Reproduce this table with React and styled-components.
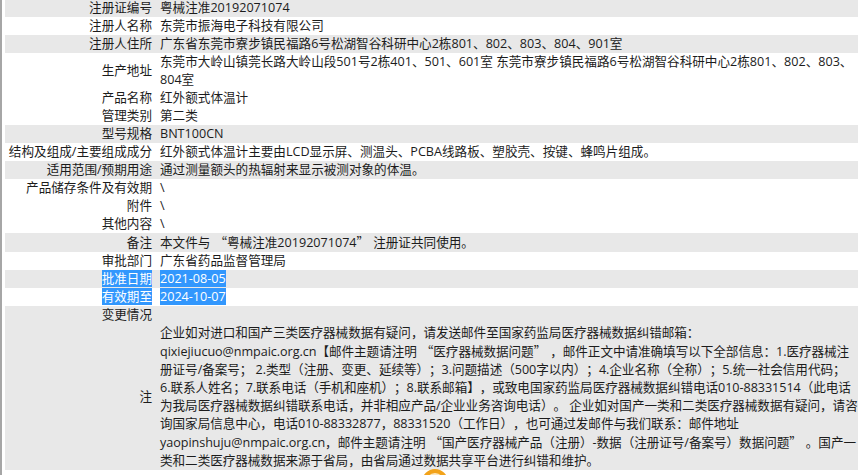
import React from "react";
import styled, { createGlobalStyle } from "styled-components";

const GlobalStyle = createGlobalStyle`
  html, body {
    margin: 0;
    padding: 0;
    background: #ffffff;
    overflow: hidden;
  }
  body {
    font-family: "Open Sans", "Noto Sans CJK SC", sans-serif;
    font-size: 12.6px;
    color: #1c1c1c;
    text-spacing-trim: space-all;
  }
`;

/* the table runs a few pixels past the right edge of the window */
const Frame = styled.div`
  width: calc(100% + 3px);
  border-left: 2px solid #a6a6a6;
  padding-left: 3px;
  margin-top: -1px;
  height: 476px;
  box-sizing: border-box;
`;

const Table = styled.table`
  width: 100%;
  table-layout: fixed;
  border-collapse: collapse;
  border-spacing: 0;
  line-height: 18px;
`;

const Row = styled.tr`
  background: ${({ $tone }) => ($tone === "gray" ? "#e8e8e8" : "#ffffff")};
`;

const Label = styled.th`
  width: 150px;
  padding: 0 3px 0 0;
  box-sizing: border-box;
  font-weight: normal;
  text-align: right;
  white-space: nowrap;
  vertical-align: ${({ $align }) => $align || "middle"};
`;

const Value = styled.td`
  padding: 0 0 0 5px;
  text-align: left;
  vertical-align: top;
`;

const NoticeLine = styled.div`
  white-space: nowrap;
  letter-spacing: -0.05px;
`;

/* the curly quotes of the original font take a little more than a full em */
const Quote = styled.span`
  font-family: "Noto Sans CJK SC", sans-serif;
  padding: ${({ $open }) => ($open ? "0 0 0 4px" : "0 4px 0 0")};
`;

const Selected = styled.span`
  background: #3297fd;
  color: #ffffff;
`;

const FloatBadge = styled.div`
  position: fixed;
  left: 422px;
  top: 469px;
  width: 26px;
  height: 26px;
  border-radius: 50%;
  border: 4px solid #f2a31b;
  background: #fde7bd;
  box-sizing: border-box;
`;

const fmt = (text) =>
  text.split(/([“”])/).map((part, i) =>
    part === "“" || part === "”" ? (
      <Quote key={i} $open={part === "“"}>
        {part}
      </Quote>
    ) : (
      part
    )
  );

const rows = [
  { label: "注册证编号", value: "粤械注准20192071074", tone: "gray" },
  { label: "注册人名称", value: "东莞市振海电子科技有限公司", tone: "white" },
  {
    label: "注册人住所",
    value: "广东省东莞市寮步镇民福路6号松湖智谷科研中心2栋801、802、803、804、901室",
    tone: "gray",
  },
  {
    label: "生产地址",
    value:
      "东莞市大岭山镇莞长路大岭山段501号2栋401、501、601室 东莞市寮步镇民福路6号松湖智谷科研中心2栋801、802、803、804室",
    tone: "white",
  },
  { label: "产品名称", value: "红外额式体温计", tone: "white" },
  { label: "管理类别", value: "第二类", tone: "white" },
  { label: "型号规格", value: "BNT100CN", tone: "gray" },
  {
    label: "结构及组成/主要组成成分",
    value: "红外额式体温计主要由LCD显示屏、测温头、PCBA线路板、塑胶壳、按键、蜂鸣片组成。",
    tone: "white",
  },
  { label: "适用范围/预期用途", value: "通过测量额头的热辐射来显示被测对象的体温。", tone: "gray" },
  { label: "产品储存条件及有效期", value: "\\", tone: "white" },
  { label: "附件", value: "\\", tone: "white" },
  { label: "其他内容", value: "\\", tone: "white" },
  { label: "备注", value: "本文件与“粤械注准20192071074”注册证共同使用。", tone: "gray" },
  { label: "审批部门", value: "广东省药品监督管理局", tone: "white" },
  { label: "批准日期", value: "2021-08-05", tone: "gray", selected: true },
  { label: "有效期至", value: "2024-10-07", tone: "white", selected: true },
  { label: "变更情况", value: "", tone: "gray", align: "top" },
];

const notice = [
  "企业如对进口和国产三类医疗器械数据有疑问，请发送邮件至国家药监局医疗器械数据纠错邮箱：",
  "qixiejiucuo@nmpaic.org.cn【邮件主题请注明“医疗器械数据问题”，邮件正文中请准确填写以下全部信息：1.医疗器械注",
  "册证号/备案号； 2.类型（注册、变更、延续等）；3.问题描述（500字以内）；4.企业名称（全称）；5.统一社会信用代码；",
  "6.联系人姓名；7.联系电话（手机和座机）；8.联系邮箱】，或致电国家药监局医疗器械数据纠错电话010-88331514（此电话",
  "为我局医疗器械数据纠错联系电话，并非相应产品/企业业务咨询电话）。 企业如对国产一类和二类医疗器械数据有疑问，请咨",
  "询国家局信息中心，电话010-88332877，88331520（工作日），也可通过发邮件与我们联系：邮件地址",
  "yaopinshuju@nmpaic.org.cn，邮件主题请注明“国产医疗器械产品（注册）-数据（注册证号/备案号）数据问题”。国产一",
  "类和二类医疗器械数据来源于省局，由省局通过数据共享平台进行纠错和维护。",
];

export default function App() {
  return (
    <>
      <GlobalStyle />
      <Frame>
        <Table>
          <tbody>
            {rows.map((row) => (
              <Row key={row.label} $tone={row.tone}>
                <Label $align={row.align}>
                  {row.selected ? <Selected>{row.label}</Selected> : row.label}
                </Label>
                <Value>
                  {row.selected ? <Selected>{fmt(row.value)}</Selected> : fmt(row.value)}
                </Value>
              </Row>
            ))}
            <Row $tone="gray">
              <Label>注</Label>
              <Value>
                {notice.map((line, i) => (
                  <NoticeLine key={i}>{fmt(line)}</NoticeLine>
                ))}
              </Value>
            </Row>
          </tbody>
        </Table>
      </Frame>
      <FloatBadge />
    </>
  );
}
